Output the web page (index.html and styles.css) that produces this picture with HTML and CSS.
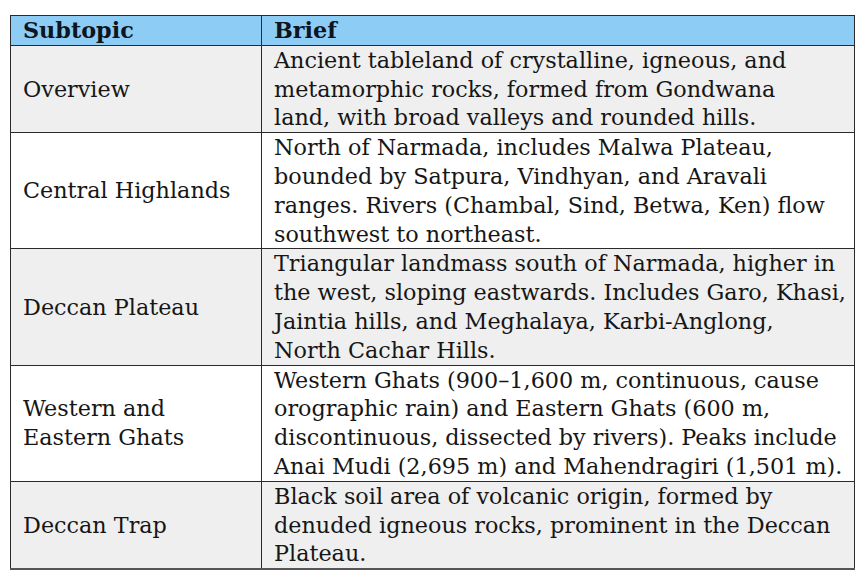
FILE: index.html
```html
<!DOCTYPE html>
<html>
<head>
<meta charset="utf-8">
<link rel="stylesheet" href="styles.css">
</head>
<body>
<div class="page">
<table class="topics">
  <colgroup>
    <col class="col-sub">
    <col class="col-brief">
  </colgroup>
  <thead>
    <tr><th>Subtopic</th><th>Brief</th></tr>
  </thead>
  <tbody>
    <tr class="shade">
      <td class="sub">Overview</td>
      <td class="brief">Ancient tableland of crystalline, igneous, and metamorphic rocks, formed from Gondwana<br>land, with broad valleys and rounded hills.</td>
    </tr>
    <tr>
      <td class="sub">Central Highlands</td>
      <td class="brief">North of Narmada, includes Malwa Plateau, bounded by Satpura, Vindhyan, and Aravali ranges. Rivers (Chambal, Sind, Betwa, Ken) flow southwest to northeast.</td>
    </tr>
    <tr class="shade">
      <td class="sub">Deccan Plateau</td>
      <td class="brief">Triangular landmass south of Narmada, higher in the west, sloping eastwards. Includes Garo, Khasi, Jaintia hills, and Meghalaya, Karbi-Anglong,<br>North Cachar Hills.</td>
    </tr>
    <tr>
      <td class="sub">Western and<br>Eastern Ghats</td>
      <td class="brief">Western Ghats (900–1,600 m, continuous, cause orographic rain) and Eastern Ghats (600 m, discontinuous, dissected by rivers). Peaks include Anai Mudi (2,695 m) and Mahendragiri (1,501 m).</td>
    </tr>
    <tr class="shade">
      <td class="sub">Deccan Trap</td>
      <td class="brief">Black soil area of volcanic origin, formed by denuded igneous rocks, prominent in the Deccan Plateau.</td>
    </tr>
  </tbody>
</table>
</div>
</body>
</html>
```
FILE: styles.css
```css
html, body {
  margin: 0;
  padding: 0;
  background: #ffffff;
}
.page {
  padding: 15px 0 0 10px;
}
.topics {
  border-collapse: collapse;
  width: 844px;
  table-layout: fixed;
  font-family: "DejaVu Serif", "Liberation Serif", serif;
  font-size: 22.3px;
  line-height: 28.8px;
  color: #161616;
  border: 1.5px solid #222;
  border-bottom: 2px solid #555;
}
.col-sub { width: 251px; }
.col-brief { width: 593px; }
.topics th, .topics td {
  border-left: 1px solid #2a2a2a;
  border-right: 1px solid #2a2a2a;
  border-top: 1px solid #2a2a2a;
  padding: 0 6px 0 12px;
  text-align: left;
  vertical-align: middle;
}
.topics th {
  background: #8dcdf5;
  font-weight: bold;
  color: #0d1520;
}
.shade td {
  background: #efefef;
}
```
